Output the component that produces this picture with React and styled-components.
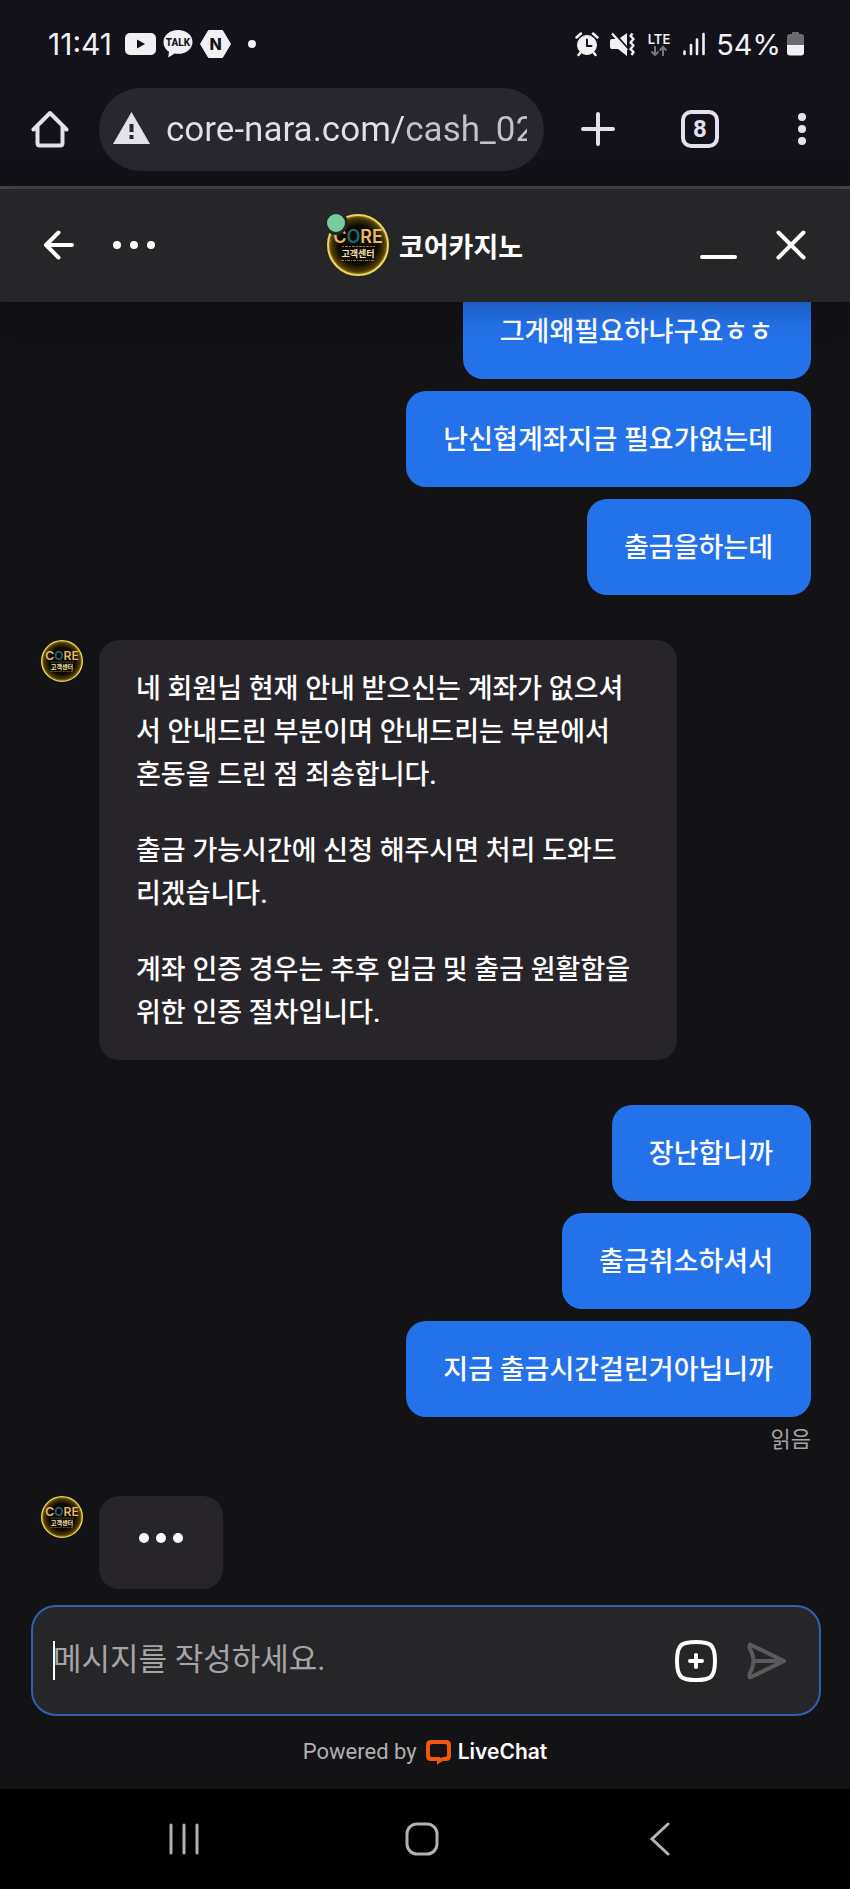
import React from 'react';
import styled, { createGlobalStyle } from 'styled-components';

const GlobalStyle = createGlobalStyle`
    * {
        box-sizing: border-box;
    }
    body {
        margin: 0;
        background: #131215;
        color: #fff;
        font-family: Roboto, "Noto Sans CJK KR", sans-serif;
    }
    button {
        border: 0;
        padding: 0;
        background: none;
        color: inherit;
        font: inherit;
    }
    svg {
        display: block;
        flex: none;
    }
`;

const Screen = styled.div`
    display: flex;
    flex-direction: column;
    height: 100vh;
    overflow: hidden;
`;

/* phone status bar */

const StatusBar = styled.div`
    display: flex;
    justify-content: space-between;
    flex: none;
    height: 72px;
    padding: 16px 46px 0 48px;
    background: #13121a;
    color: #f1f0f3;
    font-family: Inter, sans-serif;
    font-size: 29px;
`;

const StatusGroup = styled.div`
    display: flex;
    align-items: center;
    gap: ${(props) => props.$gap};
`;

const Clock = styled.span`
    margin-right: 6px;
    font-size: 30px;
`;

/* browser bar */

const Toolbar = styled.div`
    display: flex;
    align-items: center;
    flex: none;
    height: 117px;
    padding: 0 18px 0 31px;
    border-bottom: 3px solid #47464c;
    background: #13121a;
    color: #e4e1ec;
`;

const IconButton = styled.button`
    display: flex;
    align-items: center;
    justify-content: center;
    flex: none;
    width: ${(props) => props.$width};
    height: 60px;
`;

const AddressBar = styled.label`
    display: flex;
    align-items: center;
    gap: 16px;
    flex: 1;
    min-width: 0;
    height: 83px;
    margin: 0 24px 0 30px;
    padding: 0 17px 0 14px;
    border-radius: 42px;
    background: #282730;
`;

const AddressInput = styled.input`
    flex: 1;
    min-width: 0;
    height: 50px;
    padding: 0;
    border: 0;
    outline: 0;
    background: linear-gradient(to right, #e2dfea 238px, #c3c1cb 238px);
    background-clip: text;
    -webkit-text-fill-color: transparent;
    font-family: Roboto, sans-serif;
    font-size: 35px;
`;

const ToolbarActions = styled.div`
    display: flex;
    gap: 42px;
`;

const TabCount = styled.span`
    display: flex;
    align-items: center;
    justify-content: center;
    width: 38px;
    height: 38px;
    border: 4px solid #e4e1ec;
    border-radius: 10px;
    font-family: Roboto, sans-serif;
    font-size: 24px;
    font-weight: 700;
`;

/* chat */

const Header = styled.header`
    position: relative;
    z-index: 1;
    display: grid;
    grid-template-columns: 1fr auto 1fr;
    align-items: center;
    flex: none;
    height: 113px;
    padding: 0 44px 2px;
    background: #262528;
    box-shadow: 0 4px 32px rgba(0, 0, 0, 0.3);
`;

const HeaderActions = styled.div`
    display: flex;
    justify-content: ${(props) => (props.$end ? 'flex-end' : 'flex-start')};
    gap: 39px;
`;

const Agent = styled.div`
    display: flex;
    align-items: center;
    gap: 10px;
`;

const AgentPhoto = styled.div`
    position: relative;
`;

const OnlineDot = styled.span`
    position: absolute;
    top: -3px;
    left: -3px;
    width: 24px;
    height: 24px;
    border: 3px solid #262528;
    border-radius: 50%;
    background: #76cda0;
`;

const AgentName = styled.h1`
    margin: 0;
    padding-top: 6px;
    font-size: 27px;
    font-weight: 700;
    line-height: 40px;
`;

const Messages = styled.main`
    display: flex;
    flex-direction: column;
    justify-content: flex-end;
    gap: 45px;
    flex: 1;
    min-height: 0;
    overflow: hidden;
    padding: 0 39px 16px 41px;
`;

const SentGroup = styled.div`
    display: flex;
    flex-direction: column;
    align-items: flex-end;
    flex: none;
    gap: 12px;
`;

const ReceivedRow = styled.div`
    display: flex;
    align-items: flex-start;
    flex: none;
    gap: 16px;
`;

const Bubble = styled.div`
    max-width: 75%;
    padding: 28px 38px 25px 37px;
    border-radius: 20px;
    background: ${(props) => (props.$sent ? '#2472ea' : '#272529')};
    font-size: 27px;
    font-weight: 500;
    line-height: 43px;
`;

const Para = styled.p`
    margin: 0;
    & + & {
        margin-top: 33px;
    }
`;

const ReadStatus = styled.span`
    margin-top: -4px;
    padding-top: 4px;
    color: #a3a2a4;
    font-size: 22px;
    line-height: 22px;
`;

const Typing = styled.div`
    display: flex;
    justify-content: center;
    width: 124px;
    height: 93px;
    padding-top: 37px;
    border-radius: 20px;
    background: #272529;
`;

const Composer = styled.form`
    display: flex;
    align-items: center;
    flex: none;
    height: 111px;
    margin: 0 29px 0 31px;
    padding: 0 32px 0 20px;
    border: 2px solid #2f62ac;
    border-radius: 25px;
    background: #262628;
`;

const Caret = styled.span`
    width: 2px;
    height: 39px;
    margin-right: -2px;
    background: #fff;
`;

const MessageInput = styled.input`
    flex: 1;
    min-width: 0;
    height: 50px;
    padding: 0 0 2px;
    border: 0;
    outline: 0;
    background: none;
    color: #fff;
    font-family: inherit;
    font-size: 31px;
    &::placeholder {
        color: #a5a4a6;
        opacity: 1;
    }
`;

const ComposerActions = styled.div`
    display: flex;
    gap: 30px;
`;

const Footer = styled.footer`
    display: flex;
    align-items: center;
    justify-content: center;
    gap: 9px;
    flex: none;
    height: 73px;
    padding-bottom: 2px;
    color: #b0afb2;
    font-family: Roboto, sans-serif;
    font-size: 22px;
`;

const Brand = styled.a`
    display: flex;
    align-items: center;
    gap: 7px;
    color: #fff;
    font-family: Inter, sans-serif;
    font-weight: 600;
    font-size: 21px;
    text-decoration: none;
`;

const NavBar = styled.nav`
    display: flex;
    justify-content: center;
    align-items: center;
    gap: 138px;
    flex: none;
    height: 100px;
    padding-right: 6px;
    background: #000;
    color: #b3b1b4;
`;

const YoutubeIcon = () => (
    <svg width="31" height="28" viewBox="0 0 31 28">
        <rect y="3" width="31" height="22" rx="5" fill="#f1f0f3" />
        <path d="M12 9.500v9l8-4.500z" fill="#13121a" />
    </svg>
);

const TalkIcon = () => (
    <svg width="30" height="28" viewBox="0 0 30 28">
        <path d="M15 0C6.700 0 .5 5.200.5 12c0 4.500 2.400 7.800 5.500 9.700L5.200 27.500l6.500-4c1 .2 2.200.3 3.300.3 8.300 0 14.500-5.100 14.500-11.900S23.300 0 15 0z" fill="#f1f0f3" />
        <text x="15" y="15.500" textAnchor="middle" fontFamily="Roboto" fontSize="10" fontWeight="800" fill="#13121a">TALK</text>
    </svg>
);

const NIcon = () => (
    <svg width="31" height="28" viewBox="0 0 31 28">
        <path d="M8.500.5h14L30.500 14l-8 13.500h-14L.5 14z" fill="#f1f0f3" stroke="#f1f0f3" strokeLinejoin="round" />
        <text x="15.500" y="19.500" textAnchor="middle" fontFamily="Inter" fontSize="16" fontWeight="800" fill="#13121a">N</text>
    </svg>
);

const AlarmIcon = () => (
    <svg width="24" height="26" viewBox="0 0 24 26" fill="none" stroke="#f1f0f3" strokeLinecap="round">
        <circle cx="12" cy="14" r="9.500" fill="#f1f0f3" />
        <path d="M1.500 6.500 6 2.500M22.500 6.500 18 2.500M5.500 21.500 3.500 24M18.500 21.500l2 2.500" strokeWidth="2.500" />
        <path d="M12 8.500V15h4.500" stroke="#13121a" strokeWidth="2" />
    </svg>
);

const MuteIcon = () => (
    <svg width="25" height="26" viewBox="0 0 25 26">
        <path d="M0 10q0-2 2-2h5l10 11v6L8 18H2q-2 0-2-2zM10 7l7-5v13z" fill="#f1f0f3" />
        <path d="M2 2.500 17 19" stroke="#f1f0f3" strokeWidth="2.400" />
        <path d="M22.500 2.500l-2 2.500 3 3-3 3.500 3 3-3 3.500 3 3-2 3" fill="none" stroke="#f1f0f3" strokeWidth="2.400" strokeLinejoin="round" />
    </svg>
);

const LteIcon = () => (
    <svg width="26" height="26" viewBox="0 0 26 26">
        <text x="13" y="13" textAnchor="middle" fontFamily="Inter" fontSize="13" fontWeight="600" fill="#f1f0f3">LTE</text>
        <path d="M9 15v9M5.500 20.500 9 24l3.500-3.500M17 25v-9M13.500 19.500 17 16l3.500 3.500" fill="none" stroke="#77767b" strokeWidth="2" />
    </svg>
);

const SignalIcon = () => (
    <svg width="22" height="26" viewBox="0 0 22 26" stroke="#f1f0f3" strokeWidth="2.600" strokeLinecap="round">
        <path d="M1.500 20.500V23M8 14v9M14 8.500V23M20.500 3v20" />
    </svg>
);

const BatteryIcon = () => (
    <svg width="17" height="26" viewBox="0 0 17 26">
        <path d="M5 1h7v2h2q3 0 3 3v8H0V6q0-3 3-3h2z" fill="#6b6a6f" />
        <path d="M0 14h17v7.500q0 3-3 3H3q-3 0-3-3z" fill="#f1f0f3" />
    </svg>
);

const Dots = ({ width, r, gap, vertical }) => {
    const mid = width / 2;
    return (
        <svg width={vertical ? r * 2 : width} height={vertical ? width : r * 2} fill="currentColor">
            {[-gap, 0, gap].map((d) => (
                <circle key={d} cx={vertical ? r : mid + d} cy={vertical ? mid + d : r} r={r} />
            ))}
        </svg>
    );
};

const Avatar = ({ size }) => (
    <svg width={size} height={size} viewBox="0 0 62 62">
        <defs>
            <radialGradient id={`glow${size}`}>
                <stop offset="65%" stopColor="#0d0a02" />
                <stop offset="88%" stopColor="#4a3804" />
                <stop offset="100%" stopColor="#a08414" />
            </radialGradient>
        </defs>
        <circle cx="31" cy="31" r="30" fill={`url(#glow${size})`} stroke="#ead660" strokeWidth="2" />
        <text x="31" y="29" textAnchor="middle" fontFamily="Inter" fontSize="18" fontWeight="600" fill="#e6b765">
            C<tspan fill="#1f6478">O</tspan>RE
        </text>
        <path d="M15 32.500h33" stroke="#8f7a4c" strokeDasharray="2 1 3 1" />
        <text x="31" y="43" textAnchor="middle" fontFamily="Noto Sans CJK KR" fontSize="9" fontWeight="700" fill="#f3e3b0">고객센터</text>
        <path d="M14 46.500h34" stroke="#8f7a4c" strokeDasharray="3 1 1 1" />
    </svg>
);

function App() {
  return (
    <Screen>
        <GlobalStyle />

        <StatusBar>
            <StatusGroup $gap="7px">
                <Clock>11:41</Clock>
                <YoutubeIcon />
                <TalkIcon />
                <NIcon />
                <svg width="32" height="8"><circle cx="14" cy="4" r="4" fill="#f1f0f3" /></svg>
            </StatusGroup>
            <StatusGroup $gap="11px">
                <AlarmIcon />
                <MuteIcon />
                <LteIcon />
                <SignalIcon />
                <StatusGroup $gap="6px">
                    <span>54%</span>
                    <BatteryIcon />
                </StatusGroup>
            </StatusGroup>
        </StatusBar>

        <Toolbar>
            <IconButton $width="38px" aria-label="Home">
                <svg width="38" height="38" viewBox="0 0 38 38" fill="none" stroke="currentColor" strokeWidth="4" strokeLinejoin="round" strokeLinecap="round">
                    <path d="M2.500 19.500 19 3l16.500 16.500M6.500 16.500V33q0 2.500 2.500 2.500h20q2.500 0 2.500-2.500V16.500" />
                </svg>
            </IconButton>
            <AddressBar>
                <svg width="37" height="34" viewBox="0 0 37 34">
                    <path d="M18.500 0 37 32H0z" fill="#e4e1ec" />
                    <path d="M18.500 12v8M18.500 23v4" stroke="#282730" strokeWidth="4" />
                </svg>
                <AddressInput aria-label="Address" defaultValue="core-nara.com/cash_02" />
            </AddressBar>
            <ToolbarActions>
                <IconButton $width="60px" aria-label="New tab">
                    <svg width="34" height="34" viewBox="0 0 34 34" stroke="currentColor" strokeWidth="4" strokeLinecap="round">
                        <path d="M17 2v30M2 17h30" />
                    </svg>
                </IconButton>
                <IconButton $width="60px" aria-label="Tabs">
                    <TabCount>8</TabCount>
                </IconButton>
                <IconButton $width="60px" aria-label="Menu">
                    <Dots width={34} r={4} gap={12} vertical />
                </IconButton>
            </ToolbarActions>
        </Toolbar>

        <Header>
            <HeaderActions>
                <IconButton $width="30px" aria-label="Back">
                    <svg width="30" height="30" viewBox="0 0 30 30" fill="none" stroke="currentColor" strokeWidth="4" strokeLinecap="round" strokeLinejoin="round">
                        <path d="M28 15H2M14.500 2.500 2 15l12.500 12.500" />
                    </svg>
                </IconButton>
                <IconButton $width="42px" aria-label="Options">
                    <Dots width={42} r={4} gap={17} />
                </IconButton>
            </HeaderActions>
            <Agent>
                <AgentPhoto>
                    <Avatar size={62} />
                    <OnlineDot />
                </AgentPhoto>
                <AgentName>코어카지노</AgentName>
            </Agent>
            <HeaderActions $end>
                <IconButton $width="37px" aria-label="Minimize">
                    <svg width="37" height="30" viewBox="0 0 37 30" stroke="currentColor" strokeWidth="4" strokeLinecap="round">
                        <path d="M2 27h33" />
                    </svg>
                </IconButton>
                <IconButton $width="30px" aria-label="Close">
                    <svg width="30" height="30" viewBox="0 0 30 30" stroke="currentColor" strokeWidth="4" strokeLinecap="round">
                        <path d="M2.500 2.500l25 25M27.500 2.500l-25 25" />
                    </svg>
                </IconButton>
            </HeaderActions>
        </Header>

        <Messages>
            <SentGroup>
                <Bubble $sent>그게왜필요하냐구요ㅎㅎ</Bubble>
                <Bubble $sent>난신협계좌지금 필요가없는데</Bubble>
                <Bubble $sent>출금을하는데</Bubble>
            </SentGroup>

            <ReceivedRow>
                <Avatar size={42} />
                <Bubble>
                    <Para>네 회원님 현재 안내 받으신는 계좌가 없으셔서 안내드린 부분이며 안내드리는 부분에서 혼동을 드린 점 죄송합니다.</Para>
                    <Para>출금 가능시간에 신청 해주시면 처리 도와드리겠습니다.</Para>
                    <Para>계좌 인증 경우는 추후 입금 및 출금 원활함을 위한 인증 절차입니다.</Para>
                </Bubble>
            </ReceivedRow>

            <SentGroup>
                <Bubble $sent>장난합니까</Bubble>
                <Bubble $sent>출금취소하셔서</Bubble>
                <Bubble $sent>지금 출금시간걸린거아닙니까</Bubble>
                <ReadStatus>읽음</ReadStatus>
            </SentGroup>

            <ReceivedRow>
                <Avatar size={42} />
                <Typing>
                    <Dots width={46} r={5} gap={17} />
                </Typing>
            </ReceivedRow>
        </Messages>

        <Composer>
            <Caret />
            <MessageInput aria-label="메시지" placeholder="메시지를 작성하세요." />
            <ComposerActions>
                <IconButton type="button" $width="42px" aria-label="Attach">
                    <svg width="42" height="42" viewBox="0 0 42 42" fill="none" stroke="currentColor" strokeWidth="4" strokeLinecap="round">
                        <path d="M21 2c14 0 19 2 19 19s-5 19-19 19S2 38 2 21 7 2 21 2z" />
                        <path d="M21 15v12M15 21h12" />
                    </svg>
                </IconButton>
                <IconButton type="submit" disabled $width="40px" aria-label="Send">
                    <svg width="40" height="40" viewBox="0 0 40 40" fill="none" stroke="#5b5a5c" strokeWidth="4" strokeLinejoin="round">
                        <path d="M3 3.500 37 20 3 36.500Q1.500 34 4 30q5-10 0-20Q1.500 6 3 3.500zM8 20h28" />
                    </svg>
                </IconButton>
            </ComposerActions>
        </Composer>

        <Footer>
            Powered by
            <Brand href="#">
                <svg width="25" height="26" viewBox="0 0 25 26" fill="#f1570f">
                    <path fillRule="evenodd" d="M5 1h15q5 0 5 5v11q0 5-5 5h-3q-3 1-6 4v-4H5q-5 0-5-5V6q0-5 5-5zm1 4Q4 5 4 7v9q0 2 2 2h8v1l3-1h2q2 0 2-2V7q0-2-2-2z" />
                </svg>
                LiveChat
            </Brand>
        </Footer>

        <NavBar>
            <IconButton $width="100px" aria-label="Recent apps">
                <svg width="32" height="34" viewBox="0 0 32 34" stroke="currentColor" strokeWidth="3" strokeLinecap="round">
                    <path d="M3 3v28M16 3v28M29 3v28" />
                </svg>
            </IconButton>
            <IconButton $width="100px" aria-label="Home screen">
                <svg width="34" height="34" viewBox="0 0 34 34" fill="none" stroke="currentColor" strokeWidth="3">
                    <rect x="2" y="2" width="30" height="30" rx="10" />
                </svg>
            </IconButton>
            <IconButton $width="100px" aria-label="Go back">
                <svg width="20" height="34" viewBox="0 0 20 34" fill="none" stroke="currentColor" strokeWidth="3" strokeLinecap="round">
                    <path d="M18 2 2 17l16 15" />
                </svg>
            </IconButton>
        </NavBar>
    </Screen>
  )
}

export default App
